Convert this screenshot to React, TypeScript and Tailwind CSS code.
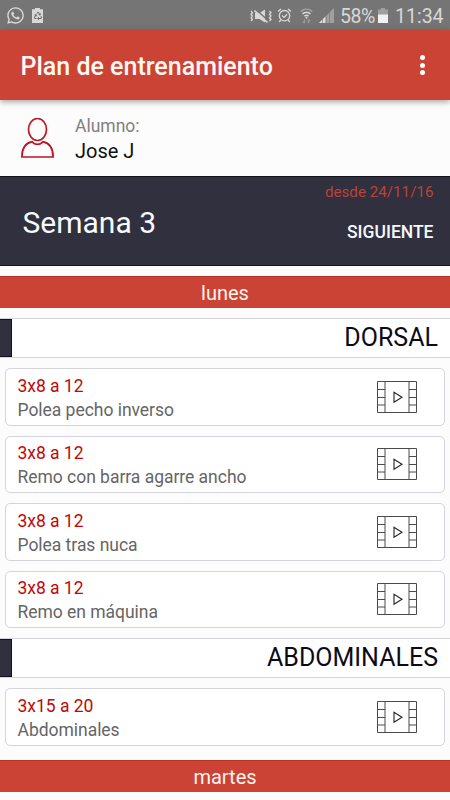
import {FaRecycle, FaWhatsapp} from 'react-icons/fa'

type Exercise = {series: string; name: string}
type Group = {title: string; exercises: Exercise[]}

const groups: Group[] = [
  {
    title: 'DORSAL',
    exercises: [
      {series: '3x8 a 12', name: 'Polea pecho inverso'},
      {series: '3x8 a 12', name: 'Remo con barra agarre ancho'},
      {series: '3x8 a 12', name: 'Polea tras nuca'},
      {series: '3x8 a 12', name: 'Remo en máquina'},
    ],
  },
  {
    title: 'ABDOMINALES',
    exercises: [{series: '3x15 a 20', name: 'Abdominales'}],
  },
]

function StatusBar() {
  return (
    <div className="flex h-[30px] shrink-0 items-center bg-[#757575] pl-[7px] pr-[8px] pt-px text-[#d8d8d8]">
      <FaWhatsapp className="h-[19px] w-[17px]" />
      {/* Battery saver */}
      <div className="relative ml-2 h-[15px] w-[11px]">
        <svg className="h-[15px] w-[11px]" viewBox="0 0 11 15">
          <path d="M3 0h5v1.3h3V15H0V1.3h3z" fill="currentColor" />
        </svg>
        <FaRecycle className="absolute left-[1.5px] top-[4px] h-2 w-2 text-[#6a6a6a]" />
      </div>

      <div className="ml-auto flex items-center">
        {/* Vibrate / mute */}
        <svg className="h-4 w-[23px]" viewBox="0 0 23 16" fill="none">
          <path d="M5 5h4.5L15 1.5v13L9.5 11H5z" fill="currentColor" />
          <path d="M5.5 1 18.5 13" stroke="#757575" strokeWidth="1.5" />
          <path d="M4.5 2.5 17.5 14.5" stroke="currentColor" strokeWidth="1.7" />
          <path
            d="m1 3 1.5 1.7L1 6.4l1.5 1.7L1 9.8l1.5 1.7L1 13M19.500 3 21 4.700l-1.500 1.700L21 8.100l-1.500 1.700 1.500 1.700-1.500 1.500"
            stroke="currentColor"
            strokeWidth="1.3"
          />
        </svg>
        {/* Alarm */}
        <svg className="ml-1 h-[15px] w-[15px]" viewBox="0 0 15 15" fill="none" stroke="currentColor" strokeWidth="1.3">
          <circle cx="7.5" cy="7.7" r="5.2" />
          <path d="M1 3.600 4 1M14 3.600 11 1M3.800 11.800 2.200 14M11.200 11.800l1.600 2.200M5 7.500l2.100 1.900 3-3.200" />
        </svg>
        {/* Wifi */}
        <svg className="ml-2 h-[16px] w-[13px]" viewBox="0 0 13 16" fill="none" strokeWidth="1.5">
          <path d="M.8 3.600c3.400-3 8-3 11.400 0" stroke="#a5a5a5" />
          <path d="M2.500 6c2.300-2.200 5.700-2.200 8 0M4.400 8.200c1.300-1.200 2.900-1.200 4.200 0" stroke="currentColor" />
          <circle cx="6.5" cy="9.8" r="1" fill="currentColor" />
          <path d="M4.500 11.500V15M3 13.500 4.500 15M8.500 15v-3.500M8.500 11.500l1.500 1.500" stroke="#999" />
        </svg>
        {/* Signal */}
        <svg className="ml-[6px] h-[15px] w-[15px]" viewBox="0 0 15 15">
          <path d="M15 0v15H0z" fill="#a0a0a0" />
          <path d="M6.500 8.500V15H0z" fill="#dedede" />
          <path d="M3.500 10v5M7 7v8M10.500 3v12" stroke="#757575" strokeWidth=".6" />
        </svg>
        <span className="ml-[6px] w-[35px] whitespace-nowrap pt-px text-[19.5px] leading-[29px] tracking-[-0.5px]">58%</span>
        {/* Battery */}
        <svg className="ml-[3px] h-[15px] w-[10px]" viewBox="0 0 10 15">
          <path d="M3 0h4v1.500h3V15H0V1.500h3z" fill="#a0a0a0" />
          <path d="M0 6.500h10V15H0z" fill="#f2f2f2" />
        </svg>
        <span className="ml-[7px] w-[47px] whitespace-nowrap pt-px text-[19.5px] leading-[29px]">11:34</span>
      </div>
    </div>
  )
}

function DayBar({day}: {day: string}) {
  return (
    <div className="h-8 shrink-0 border-t border-[#b83223] bg-[#cb4335] text-center text-[20px] leading-[32px] text-[#fff4ed]">
      {day}
    </div>
  )
}

function FilmIcon() {
  return (
    <svg className="h-8 w-10 shrink-0" viewBox="0 0 40 32" fill="none" stroke="#4a4a4a" strokeWidth="1">
      <path d="M.5.5h39v31H.5zM8 .5v31M32 .5v31M.5 8.5H8M.5 16.5H8M.5 24H8M32 8.5h7.5M32 16.5h7.5M32 24h7.5" />
      <path d="M17 11.200v10L25 16.200z" stroke="#222" strokeWidth="1.1" />
    </svg>
  )
}

function ExerciseCard({series, name}: Exercise) {
  return (
    <div className="mx-[5px] flex h-[57.5px] items-center rounded-[5px] border border-[#d5d4dd] bg-white pl-[11.5px] pr-[27px]">
      <div className="flex-1 whitespace-nowrap pt-[1.5px] text-[17.5px] leading-6 tracking-[-0.03px]">
        <p className="text-[#c00808]">{series}</p>
        <p className="text-[#656565]">{name}</p>
      </div>
      <FilmIcon />
    </div>
  )
}

function GroupSection({title, exercises}: Group) {
  return (
    <section>
      <div className="flex h-10 border-y border-[#d5d4dd] bg-white">
        <div className="w-3 border-y border-r border-[#13131c] bg-[#30303e]" />
        <h2 className="flex-1 pr-3 text-right text-[25px] leading-[37px] text-[#0b0b18]">{title}</h2>
      </div>
      <div className="flex flex-col gap-[10px] py-[10px]">
        {exercises.map((exercise) => (
          <ExerciseCard key={exercise.name} {...exercise} />
        ))}
      </div>
    </section>
  )
}

export default function App() {
  return (
    <div className="flex h-[800px] w-[450px] flex-col overflow-hidden bg-[#fcfcfc] font-['Roboto',sans-serif]">
      <StatusBar />

      <header className="z-10 flex h-[70px] shrink-0 items-center justify-between bg-[#cb4335] pl-[20.5px] pr-[25px] shadow-[0_2px_6px_rgba(0,0,0,0.35)]">
        <h1 className="pt-[3px] text-[25px] font-medium text-[#fff8f2]">Plan de entrenamiento</h1>
        <button className="flex flex-col gap-[2.5px]" aria-label="Menu">
          <span className="h-[5px] w-[5px] rounded-full bg-white" />
          <span className="h-[5px] w-[5px] rounded-full bg-white" />
          <span className="h-[5px] w-[5px] rounded-full bg-white" />
        </button>
      </header>

      <div className="flex h-[76px] shrink-0 items-center pl-[21px]">
        <svg className="h-[41px] w-[33px]" viewBox="0 0 33 41" fill="none" stroke="#bd1420" strokeWidth="1.7">
          <ellipse cx="16.5" cy="11.5" rx="9" ry="11" />
          <path d="M11.200 23.700C5 25 .9 29.500.9 39h31.200c0-9.500-4.100-14-10.300-15.300-2.500 3.400-8.100 3.400-10.600 0z" />
        </svg>
        <div className="ml-[21px] pt-[2px]">
          <p className="text-[17.5px] leading-6 text-[#808080]">Alumno:</p>
          <p className="text-[20px] leading-[26px] text-[#111]">Jose J</p>
        </div>
      </div>

      <div className="flex h-[90px] shrink-0 justify-between border-y border-[#13131c] bg-[#30303e] pl-[22.5px] pr-[16.5px]">
        <p className="text-[30px] leading-[91px] text-[#f7fafd]">Semana 3</p>
        <div className="text-right">
          <p className="mt-[3px] text-[15.2px] leading-6 text-[#b94339]">desde 24/11/16</p>
          <button className="mt-[16px] block w-full text-right text-[17.5px] font-medium leading-6 text-[#f5f8fb]">
            SIGUIENTE
          </button>
        </div>
      </div>

      <main className="flex flex-1 flex-col pt-[10px]">
        <DayBar day="lunes" />
        <div className="pb-[4px] pt-[10px]">
          {groups.map((group) => (
            <GroupSection key={group.title} {...group} />
          ))}
        </div>
        <DayBar day="martes" />
      </main>
    </div>
  )
}
